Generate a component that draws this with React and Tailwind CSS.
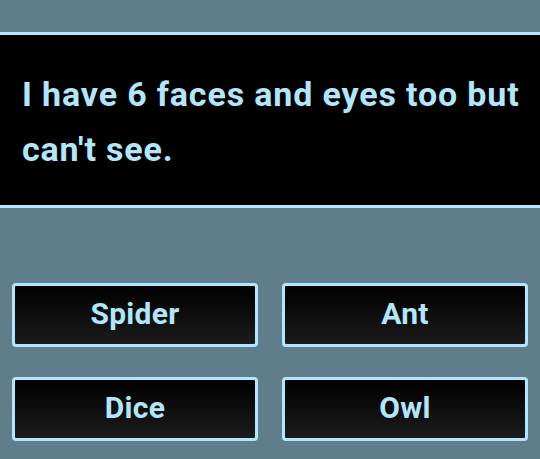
const answers = ['Spider', 'Ant', 'Dice', 'Owl'];

export default function App() {
  return (
    <div
      className="h-[459px] w-[540px] overflow-hidden bg-[#607d8b] pt-[32px]"
      style={{ fontFamily: 'Roboto, "Noto Sans", sans-serif' }}
    >
      <div className="border-y-[3px] border-[#b3e5fc] bg-black pl-[22px] pr-[12px] pt-[32px] pb-[28px]">
        <p className="text-[34px] leading-[55px] font-bold tracking-[0.85px] text-[#b3e5fc]">
          I have 6 faces and eyes too but can't see.
        </p>
      </div>
      <div className="mt-[75px] grid grid-cols-2 gap-x-[24px] gap-y-[30px] px-[12px]">
        {answers.map((a) => (
          <button
            key={a}
            className="flex h-[64px] items-center justify-center rounded-[4px] border-[3px] border-[#b3e5fc] bg-gradient-to-b from-[#030303] to-[#1c1c1c] pb-[3px] text-[30px] font-bold tracking-[0.3px] text-[#b3e5fc]"
          >
            {a}
          </button>
        ))}
      </div>
    </div>
  );
}
